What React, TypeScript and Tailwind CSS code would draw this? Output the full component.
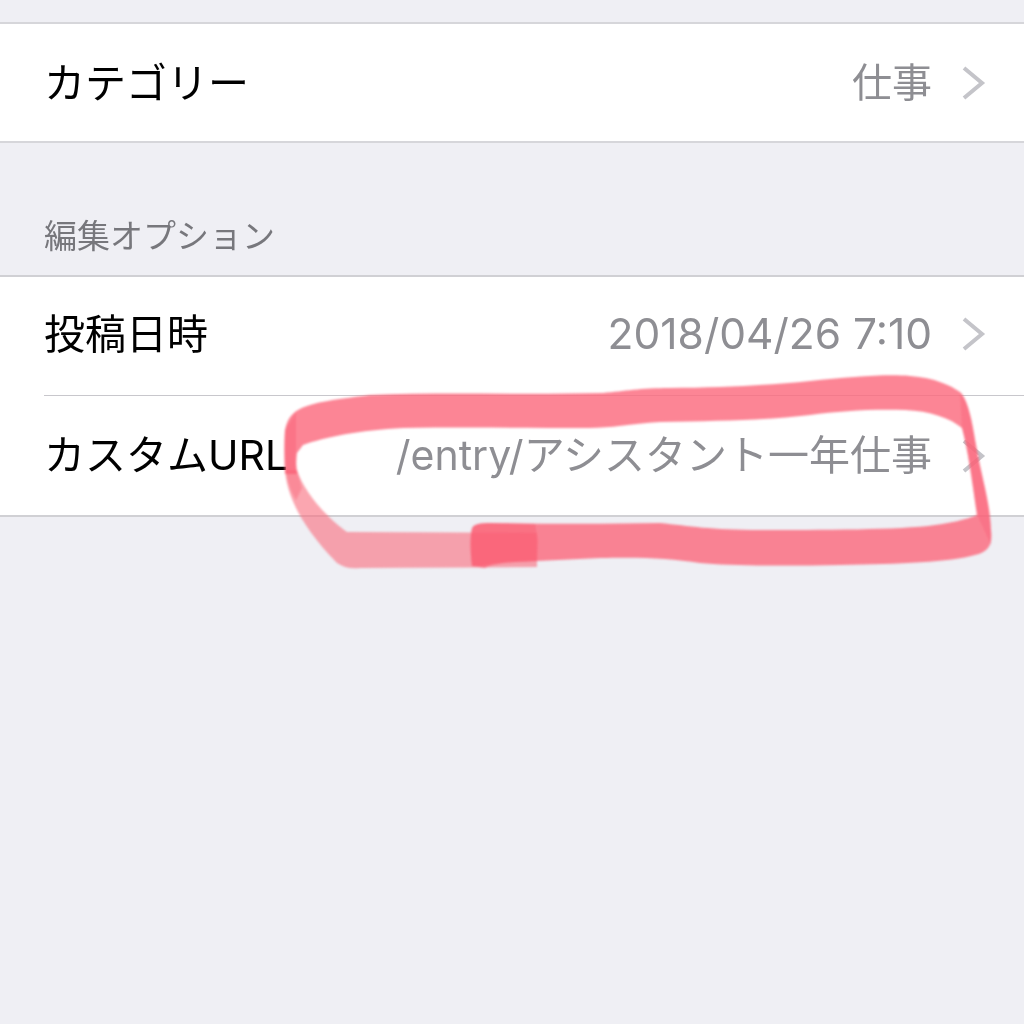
const font = { fontFamily: 'Inter, "Noto Sans CJK JP", sans-serif' };

function Chevron() {
  return (
    <svg width="26" height="36" viewBox="0 0 26 36" className="shrink-0">
      <polyline points="3,3 21,18 3,33" fill="none" stroke="#c4c4c9" strokeWidth="4" />
    </svg>
  );
}

function Row({ label, value, h, size }: { label: string; value: string; h: string; size: string }) {
  return (
    <div className={`flex items-center justify-between pl-[44px] pr-[37px] ${h}`}>
      <span className="text-[41px] leading-none text-black">{label}</span>
      <div className="flex items-center gap-[29px]">
        <span className={`leading-none text-[#8e8e93] ${size}`}>{value}</span>
        <Chevron />
      </div>
    </div>
  );
}

// 手書きの赤い囲み線
function Scribble() {
  return (
    <svg width="1024" height="1024" viewBox="0 0 1024 1024" className="absolute left-0 top-0 blur-[1px]">
      <path
        d="M285 470 C287 495 300 525 337 563 C345 568 352 569 360 568 L537 567 L537 533 L347 532 C330 520 305 495 297 470 Z"
        fill="#f9707f"
        fillOpacity="0.62"
      />
      <path
        d="M297 453 C296 462 296 468 297 474 L285 474 C284 458 284 440 285 430 C287 420 291 414 298 410 C310 403 330 400 370 395 C440 392 520 395 603 393 C625 391 640 388 670 388 C720 388 770 385 810 381 C850 377 885 374 910 376 C935 378 950 385 960 392 C968 400 972 420 976 445 C982 480 990 500 991 530 C993 545 988 552 975 555 C950 562 900 564 840 565 C790 566 730 566 700 563 C670 558 640 557 600 558 L537 561 C520 562 495 562 485 568 L472 566 C470 550 470 535 472 528 C475 524 480 523 490 523 C550 524 610 524 660 523 C690 526 710 530 760 530 C820 530 900 530 935 525 C950 523 965 520 977 515 C972 480 968 450 962 428 C950 418 930 411 905 410 C870 409 840 411 810 415 C770 420 720 421 660 422 C630 424 610 428 590 428 C530 428 470 427 403 428 C360 430 325 437 303 445 Z"
        fill="#fb6a7e"
        fillOpacity="0.82"
      />
      <path d="M473 526 C478 523 485 523 500 523 L535 524 L538 540 L537 561 C520 562 495 562 482 566 L472 566 C470 550 470 535 473 526 Z" fill="#f9566c" fillOpacity="0.4" />
      <path d="M285 430 C285 455 283 480 296 500 L302 488 C297 470 294 460 296 450 L296 412 Z" fill="#f9566c" fillOpacity="0.35" />
      <path d="M962 428 C968 450 972 480 977 515 L991 545 C992 510 982 480 976 445 C972 420 968 400 960 392 Z" fill="#f9566c" fillOpacity="0.3" />
    </svg>
  );
}

export default function App() {
  return (
    <div className="relative h-[1024px] w-[1024px] overflow-hidden bg-[#efeff4]" style={font}>
      <div className="blur-[0.5px]">
        <div className="h-[22px]" />

        <div className="border-y-2 border-[#d6d6da] bg-white">
          <Row label="カテゴリー" value="仕事" h="h-[117px] pt-[1px]" size="text-[40px]" />
        </div>

        <div className="flex h-[132px] items-end pb-[22px] pl-[44px]">
          <span className="text-[33px] leading-none text-[#77777c]">編集オプション</span>
        </div>

        <div className="border-y-2 border-[#d0d0d4] bg-white">
          <Row label="投稿日時" value="2018/04/26 7:10" h="h-[118px] pb-[4px]" size="text-[42.5px]" />
          <div className="ml-[44px] h-px bg-[#c8c7cc]" />
          <Row label="カスタムURL" value="/entry/アシスタント一年仕事" h="h-[119px]" size="text-[41px]" />
        </div>
      </div>

      <Scribble />
    </div>
  );
}
